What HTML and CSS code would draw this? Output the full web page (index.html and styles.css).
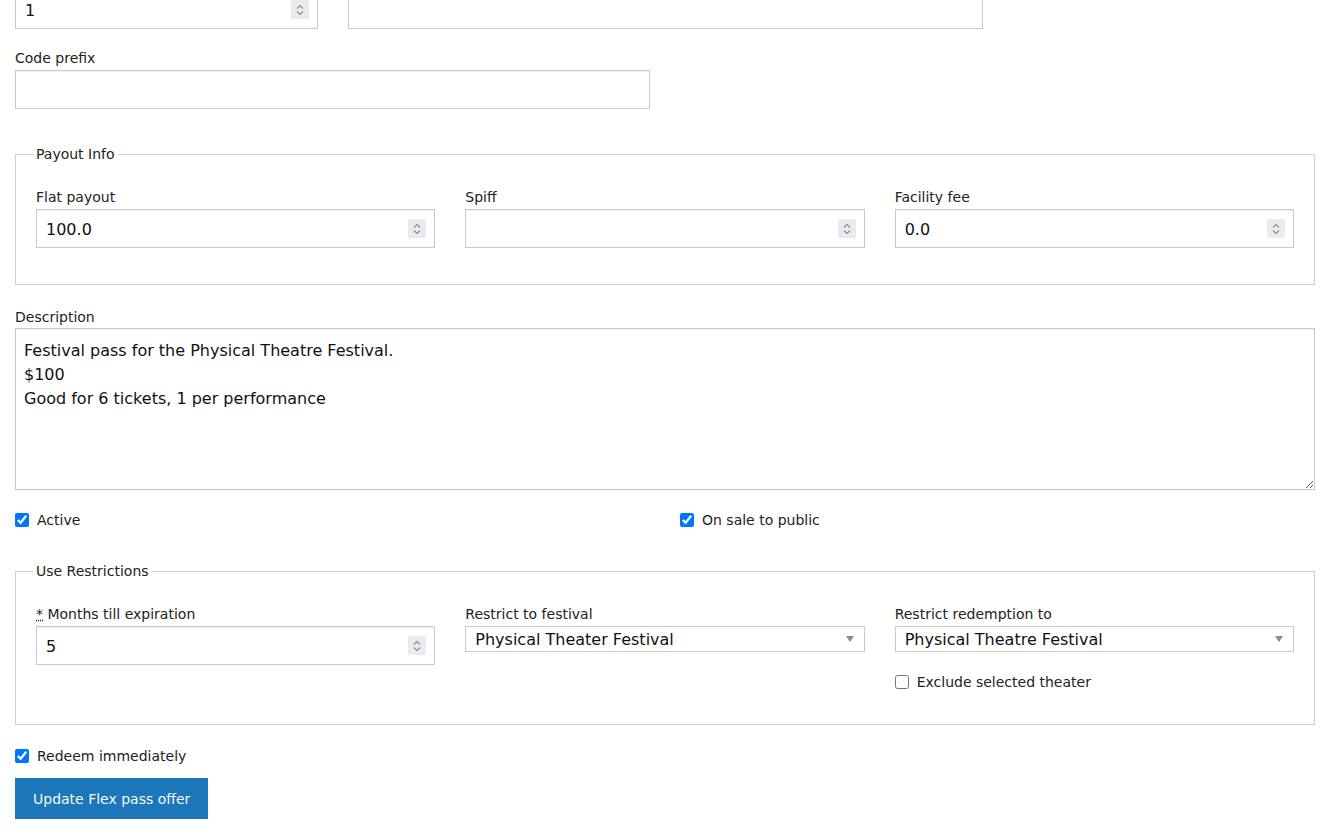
FILE: index.html
```html
<!DOCTYPE html>
<html lang="en">
<head>
  <meta charset="UTF-8" />
  <meta name="viewport" content="width=device-width, initial-scale=1.0" />
  <title>Edit Flex pass offer</title>
  <link rel="stylesheet" href="styles.css">
</head>

<body>
  <form class="offer-form" onsubmit="return false;">
    <!-- row cut off by the scroll position -->
    <div class="grid grid-4 top-row">
      <div class="field">
        <div class="num-field">
          <input type="number" value="1">
          <span class="spin"><svg width="10" height="14" viewBox="0 0 10 14"><path d="M2 5.5 5 2.5 8 5.5M2 8.5 5 11.5 8 8.5" fill="none" stroke="#8a8a90" stroke-width="1.1"/></svg></span>
        </div>
      </div>
      <div class="field span-2">
        <input type="text" class="text-input">
      </div>
    </div>

    <div class="grid grid-4 code-row">
      <div class="field span-2">
        <label>Code prefix</label>
        <input type="text" class="text-input">
      </div>
    </div>

    <fieldset class="group payout">
      <legend>Payout Info</legend>
      <div class="grid grid-3">
        <div class="field">
          <label>Flat payout</label>
          <div class="num-field">
            <input type="number" value="100.0" step="0.1">
            <span class="spin"><svg width="10" height="14" viewBox="0 0 10 14"><path d="M2 5.5 5 2.5 8 5.5M2 8.5 5 11.5 8 8.5" fill="none" stroke="#8a8a90" stroke-width="1.1"/></svg></span>
          </div>
        </div>
        <div class="field">
          <label>Spiff</label>
          <div class="num-field">
            <input type="number">
            <span class="spin"><svg width="10" height="14" viewBox="0 0 10 14"><path d="M2 5.5 5 2.5 8 5.5M2 8.5 5 11.5 8 8.5" fill="none" stroke="#8a8a90" stroke-width="1.1"/></svg></span>
          </div>
        </div>
        <div class="field">
          <label>Facility fee</label>
          <div class="num-field">
            <input type="number" value="0.0" step="0.1">
            <span class="spin"><svg width="10" height="14" viewBox="0 0 10 14"><path d="M2 5.5 5 2.5 8 5.5M2 8.5 5 11.5 8 8.5" fill="none" stroke="#8a8a90" stroke-width="1.1"/></svg></span>
          </div>
        </div>
      </div>
    </fieldset>

    <div class="field description">
      <label>Description</label>
      <textarea class="text-area">Festival pass for the Physical Theatre Festival.
$100
Good for 6 tickets, 1 per performance</textarea>
    </div>

    <div class="grid grid-2 check-row">
      <label class="check"><input type="checkbox" checked> Active</label>
      <label class="check"><input type="checkbox" checked> On sale to public</label>
    </div>

    <fieldset class="group restrictions">
      <legend>Use Restrictions</legend>
      <div class="grid grid-3">
        <div class="field">
          <label><abbr title="required">*</abbr> Months till expiration</label>
          <div class="num-field">
            <input type="number" value="5">
            <span class="spin"><svg width="10" height="14" viewBox="0 0 10 14"><path d="M2 5.5 5 2.5 8 5.5M2 8.5 5 11.5 8 8.5" fill="none" stroke="#8a8a90" stroke-width="1.1"/></svg></span>
          </div>
        </div>
        <div class="field">
          <label>Restrict to festival</label>
          <div class="select-wrap">
            <select>
              <option>Physical Theater Festival</option>
            </select>
          </div>
        </div>
        <div class="field">
          <label>Restrict redemption to</label>
          <div class="select-wrap">
            <select>
              <option>Physical Theatre Festival</option>
            </select>
          </div>
          <label class="check exclude"><input type="checkbox"> Exclude selected theater</label>
        </div>
      </div>
    </fieldset>

    <label class="check redeem"><input type="checkbox" checked> Redeem immediately</label>

    <div class="actions">
      <button type="submit" class="btn-primary">Update Flex pass offer</button>
    </div>
  </form>
</body>
</html>
```

FILE: styles.css
```css
* {
  box-sizing: border-box;
}

html, body {
  margin: 0;
  padding: 0;
  background: #fff;
}

body {
  font-family: "DejaVu Sans", Verdana, sans-serif;
  font-size: 14px;
  color: #222;
  overflow: hidden;
}

.offer-form {
  padding: 0 15px;
}

.grid {
  display: grid;
  column-gap: 30px;
}

.grid-4 {
  grid-template-columns: repeat(4, 1fr);
}

.grid-3 {
  grid-template-columns: repeat(3, 1fr);
}

.grid-2 {
  grid-template-columns: repeat(2, 1fr);
}

.span-2 {
  grid-column: span 2;
}

.field {
  display: flex;
  flex-direction: column;
}

.field > label {
  line-height: 20px;
  margin-bottom: 2px;
}

abbr[title] {
  text-decoration: underline dotted;
  cursor: help;
}

/* inputs */
.text-input,
.num-field,
.text-area {
  border: 1px solid #c9c9c9;
  box-shadow: inset 0 1px 1px rgba(0, 0, 0, 0.06);
  background: #fff;
}

.text-input {
  height: 39px;
  padding: 0 9px;
  font: inherit;
  font-size: 16px;
}

.num-field {
  display: flex;
  align-items: center;
  height: 39px;
  padding-right: 8px;
}

.num-field input {
  flex: 1;
  min-width: 0;
  height: 100%;
  border: 0;
  outline: none;
  background: transparent;
  padding: 1px 9px 0;
  font: inherit;
  font-size: 16px;
  color: #111;
  -moz-appearance: textfield;
}

.num-field input::-webkit-outer-spin-button,
.num-field input::-webkit-inner-spin-button {
  -webkit-appearance: none;
  margin: 0;
}

.spin {
  display: flex;
  align-items: center;
  justify-content: center;
  width: 18px;
  height: 19px;
  background: #ebebef;
  border-radius: 1px;
}

.text-area {
  height: 162px;
  padding: 10px 8px 8px;
  font: inherit;
  font-size: 16px;
  line-height: 24px;
  color: #111;
  resize: vertical;
}

.select-wrap {
  position: relative;
}

.select-wrap select {
  width: 100%;
  height: 26px;
  appearance: none;
  -webkit-appearance: none;
  border: 1px solid #c9c9c9;
  border-radius: 0;
  background: #fff;
  padding: 0 30px 0 9px;
  font: inherit;
  font-size: 16px;
  color: #111;
}

.select-wrap::after {
  content: "";
  position: absolute;
  right: 11px;
  top: 10px;
  border-left: 4px solid transparent;
  border-right: 4px solid transparent;
  border-top: 6px solid #8c8c8c;
  pointer-events: none;
}

/* checkboxes */
.check {
  display: flex;
  align-items: center;
  gap: 8px;
  line-height: 20px;
}

.check input {
  width: 14px;
  height: 14px;
  margin: 0;
}

/* fieldsets */
.group {
  margin: 0;
  border: 1px solid #cfcfcf;
  padding: 23px 20px 0;
}

.group legend {
  padding: 0 3px;
  margin-left: -3px;
  line-height: 20px;
}

/* vertical rhythm */
.top-row {
  margin-top: -10px;
}

.code-row {
  margin-top: 19px;
}

.payout {
  margin-top: 35px;
  padding-bottom: 36px;
}

.description {
  margin-top: 22px;
}

.description > label {
  margin-bottom: 1px;
}

.check-row {
  margin-top: 20px;
}

.restrictions {
  margin-top: 31px;
  padding-bottom: 30px;
}

.exclude {
  margin-top: 20px;
}

.redeem {
  margin-top: 21px;
}

.actions {
  margin-top: 12px;
}

.btn-primary {
  height: 41px;
  padding: 0 18px;
  border: 0;
  border-radius: 0;
  background: #1b77ba;
  color: #f4f8fb;
  font: inherit;
  font-size: 14px;
  cursor: pointer;
}
```
